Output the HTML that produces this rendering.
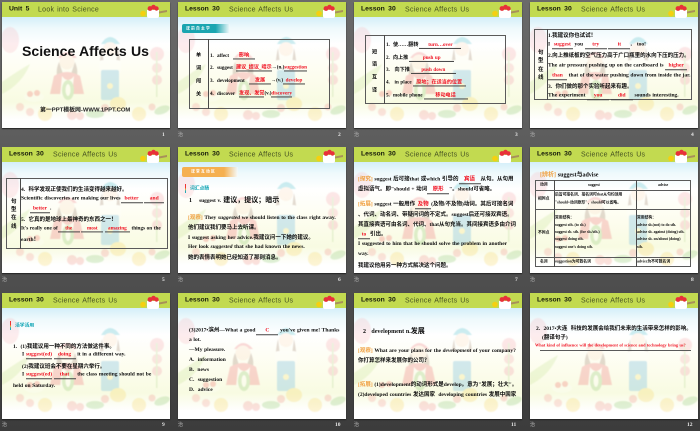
<!DOCTYPE html>
<html><head><meta charset="utf-8"><style>
html,body{margin:0;padding:0;width:700px;height:431px;overflow:hidden;background:linear-gradient(#6a6a6a,#565656 50%,#3c3c3c)}
.s{position:absolute;width:168px;height:126px;overflow:hidden;background:linear-gradient(#d4eef9 15px,#eef9fc 26px,#fff 42px,#fdfdee 75px,#f8fbe2 100px,#fff 118px);box-shadow:0 1px 1px #222}
.s>svg{position:absolute;left:0;top:0;width:168px;height:126px}
.s>svg:first-child{filter:blur(.5px)}
.h{position:absolute;left:0;top:0;width:168px;height:15px;background:#c2da50}
.l{position:absolute;left:7px;top:8px;transform:translateY(-50%);font:bold 6.8px "Liberation Sans",sans-serif;color:#14180a;line-height:1;word-spacing:1.5px;white-space:nowrap}
.a{position:absolute;left:51px;top:8px;transform:translateY(-50%);font:7px "Liberation Sans",sans-serif;color:#465222;line-height:1;letter-spacing:.27px;word-spacing:.6px;white-space:nowrap}
.t{position:absolute;white-space:nowrap;line-height:1;transform:translateY(-50%);font:bold 5.5px "Liberation Serif","Noto Sans CJK SC",serif;color:#0c0c0c;word-spacing:.3px}
.sm .t{font-size:5.1px}
.r{color:#f01020}
.o{color:#f0a040}
.u{display:inline-block;border-bottom:.5px solid #444;text-align:center;color:#f01020;line-height:1;vertical-align:baseline}
.n{position:absolute;font:bold 5.5px "Liberation Serif",serif;color:#e8e8e8;line-height:1;white-space:nowrap}
.i{position:absolute;font:5px "Liberation Sans","Noto Sans CJK SC",sans-serif;color:#bbb;line-height:1}
.b{position:absolute;box-sizing:border-box;border:.8px solid #5a5a5a}
.v{position:absolute;width:.8px;background:#4a4a4a}
.w{position:absolute;height:.7px;background:#5a5a5a}
.tg{position:absolute;height:9px;border-radius:2px 0 0 2px}
.tt{font:bold 3.8px "Liberation Sans","Noto Sans CJK SC",sans-serif;color:#fff;letter-spacing:1.2px}
.m{position:absolute;width:1px;height:9px;background:linear-gradient(#e33 45%,#f5c030 55%,#2ab 80%)}
.tl{color:#10a5b5;font-size:4.8px}
.x{font-size:3.8px;word-spacing:0}
</style></head><body>
<svg width="0" height="0" style="position:absolute"><defs>
<symbol id="bg" viewBox="0 0 168 126">
<g opacity=".24">
<ellipse cx="8" cy="38" rx="9" ry="13" fill="#f6b0b8"/><path d="M0 80Q14 70 28 62Q20 82 0 92Z" fill="#bfe08a"/>
<circle cx="155" cy="52" r="7" fill="#f39aa5"/><circle cx="155" cy="66" r="5" fill="#f39aa5"/><circle cx="155" cy="78" r="5" fill="#ee8a9a"/><rect x="154" y="50" width="1.5" height="45" fill="#a8d080"/>
<path d="M56 56Q65 44 75 56Z" fill="#e8626a"/><circle cx="65" cy="60" r="7.5" fill="#f8d8bc"/><path d="M57 60q-4 10 -1 16l5-4zM73 60q4 10 1 16l-5-4z" fill="#8a6a55"/>
<path d="M52 74Q65 66 78 74L82 92H48Z" fill="#e9585f"/><path d="M60 74Q66 82 72 74L70 94H58Z" fill="#fff"/>
<ellipse cx="66" cy="88" rx="6" ry="10" fill="#7fc060"/><ellipse cx="66" cy="88" rx="2.5" ry="6" fill="#fff"/>
<path d="M99 42Q108 28 118 42Z" fill="#35b4c0"/><circle cx="108" cy="47" r="7" fill="#f8d8bc"/><path d="M100 46q-3 14 -2 22l4-6zM116 46q3 14 2 22l-4-6z" fill="#8a6a55"/>
<rect x="97" y="58" width="22" height="14" rx="3" fill="#fff"/><rect x="99" y="68" width="18" height="30" rx="2" fill="#4aa8dc"/><circle cx="108" cy="84" r="3" fill="#f7e070"/>
<ellipse cx="32" cy="95" rx="10" ry="5" fill="#fff"/><circle cx="28" cy="92" r="3" fill="#e55"/><circle cx="35" cy="91" r="3" fill="#e55"/>
<circle cx="18" cy="105" r="4" fill="#f29088"/><circle cx="28" cy="110" r="4" fill="#f29088"/><ellipse cx="43" cy="112" rx="7" ry="7" fill="#f6d050"/>
<circle cx="70" cy="113" r="5" fill="#ee8078"/><circle cx="78" cy="114" r="4" fill="#ee8078"/><ellipse cx="93" cy="112" rx="9" ry="4" fill="#7cc060"/>
<ellipse cx="116" cy="102" rx="8" ry="7" fill="#f6d050"/><circle cx="103" cy="106" r="4" fill="#ee8078"/><ellipse cx="137" cy="112" rx="7" ry="7" fill="#f6d050"/><circle cx="150" cy="105" r="3.5" fill="#ee8078"/><ellipse cx="160" cy="108" rx="8" ry="4" fill="#7cc060" transform="rotate(-20 160 108)"/>
</g></symbol>
<symbol id="pot" viewBox="0 0 30 15">
<circle cx="4" cy="9.5" r="2.8" fill="#f5d010"/><path d="M8 6H20V12Q20 14 18 14H10Q8 14 8 12Z" fill="#fff"/><circle cx="11" cy="4.5" r="2.4" fill="#e8303a"/><circle cx="14.5" cy="3.2" r="2.4" fill="#e8303a"/><circle cx="17.5" cy="4.5" r="2.2" fill="#e8303a"/><path d="M20 7.5L28 6V8L20 9.5Z" fill="#a8905a"/>
</symbol></defs></svg>

<!-- 1 -->
<div class="s" style="left:2px;top:2px"><svg><use href="#bg"/></svg><div class="h"></div><svg style="left:137px;top:2px;width:30px;height:15px"><use href="#pot"/></svg>
<div class="l">Unit 5</div><div class="a" style="left:36px;font-size:7px">Look into Science</div>
<div class="t" style="left:20px;top:49px;font:bold 14.1px 'Liberation Sans',sans-serif;color:#111">Science Affects Us</div>
<div class="t" style="left:38px;top:107px;font:bold 5.9px 'Liberation Sans','Noto Sans CJK SC',sans-serif;color:#222">第一PPT模板网-WWW.1PPT.COM</div></div>
<div class="n" style="left:162px;top:133px">1</div>

<!-- 2 -->
<div class="s sm" style="left:178px;top:2px"><svg><use href="#bg"/></svg><div class="h"></div><svg style="left:137px;top:2px;width:30px;height:15px"><use href="#pot"/></svg>
<div class="l">Lesson 30</div><div class="a">Science Affects Us</div>
<div class="tg" style="left:4px;top:22px;width:48px;background:linear-gradient(90deg,#1aa5b0 70%,rgba(255,255,255,.5))"></div><div class="t tt" style="left:8px;top:26.5px;font-size:3.8px">课前自主学</div>
<div class="b" style="left:11px;top:37px;width:141px;height:70px"></div><div class="v" style="left:30px;top:37px;height:70px"></div>
<div class="t" style="left:18px;top:53px">单</div><div class="t" style="left:18px;top:66px">词</div><div class="t" style="left:18px;top:79px">闯</div><div class="t" style="left:18px;top:92px">关</div>
<div class="t" style="left:32px;top:54px">1.&nbsp; affect</div><div class="t" style="left:55px;top:54px"><span class="u" style="width:22px">影响</span></div>
<div class="t" style="left:32px;top:66px">2.&nbsp; suggest</div><div class="t" style="left:58px;top:66px"><span class="u">建议_提议_暗示</span>→(n.)<span class="u">suggestion</span></div>
<div class="t" style="left:32px;top:79px">3.&nbsp; development</div><div class="t" style="left:71px;top:79px"><span class="u" style="width:22px">发展</span>→(v.)<span class="u" style="width:22px">develop</span></div>
<div class="t" style="left:32px;top:92px">4.&nbsp; discover</div><div class="t" style="left:61px;top:92px"><span class="u">发现、发觉</span>(v.)<span class="u">discovery</span></div></div>
<div class="i" style="left:178px;top:133px">治</div><div class="n" style="left:338px;top:133px">2</div>

<!-- 3 -->
<div class="s sm" style="left:354px;top:2px"><svg><use href="#bg"/></svg><div class="h"></div><svg style="left:137px;top:2px;width:30px;height:15px"><use href="#pot"/></svg>
<div class="l">Lesson 30</div><div class="a">Science Affects Us</div>
<div class="b" style="left:11px;top:33px;width:141px;height:69px"></div><div class="v" style="left:30px;top:33px;height:69px"></div>
<div class="t" style="left:18px;top:50px">短</div><div class="t" style="left:18px;top:62px">语</div><div class="t" style="left:18px;top:75px">互</div><div class="t" style="left:18px;top:88px">译</div>
<div class="t" style="left:32px;top:43px">1. &nbsp;使……翻转<span class="u" style="width:42px;margin-left:1px">turn…over</span></div>
<div class="t" style="left:32px;top:56px">2. &nbsp;向上推<span class="u" style="width:45px;margin-left:1px">push up</span></div>
<div class="t" style="left:32px;top:68px">3. &nbsp; 向下推<span class="u" style="width:45px;margin-left:1px">push down</span></div>
<div class="t" style="left:32px;top:81px">4. &nbsp; in place<span class="u" style="width:53px;margin-left:1px">原地；在适当的位置</span></div>
<div class="t" style="left:32px;top:94px">5. &nbsp;mobile phone<span class="u" style="width:44px;margin-left:1px">移动电话</span></div></div>
<div class="i" style="left:354px;top:133px">治</div><div class="n" style="left:515px;top:133px">3</div>

<!-- 4 -->
<div class="s" style="left:530px;top:2px"><svg><use href="#bg"/></svg><div class="h"></div><svg style="left:137px;top:2px;width:30px;height:15px"><use href="#pot"/></svg>
<div class="l">Lesson 30</div><div class="a">Science Affects Us</div>
<div class="b" style="left:4px;top:27px;width:158px;height:71px"></div><div class="v" style="left:17px;top:27px;height:71px"></div>
<div class="t" style="left:8px;top:50px">句</div><div class="t" style="left:8px;top:58px">型</div><div class="t" style="left:8px;top:67px">在</div><div class="t" style="left:8px;top:75px">线</div>
<div class="t" style="left:18px;top:33px">1.我建议你也试试！</div>
<div class="t" style="left:18px;top:43px">I <span class="u" style="width:21px">suggest</span> you <span class="u" style="width:22px">try</span> <span class="u" style="width:22px">it</span>, &nbsp; too!</div>
<div class="t" style="left:18px;top:53px">2.向上推纸板的空气压力高于广口瓶里的水向下压的压力。</div>
<div class="t" style="left:18px;top:64px">The air pressure pushing up on the cardboard is <span class="u" style="width:22px">higher</span></div>
<div class="t" style="left:18px;top:74px"><span class="u" style="width:19px">than</span> that of the water pushing down from inside the jar.</div>
<div class="t" style="left:18px;top:84px">3.&nbsp; 你们做的那个实验听起来有趣。</div>
<div class="t" style="left:18px;top:94px">The experiment <span class="u" style="width:22px">you</span> <span class="u" style="width:22px">did</span> sounds interesting.</div></div>
<div class="i" style="left:530px;top:133px">治</div><div class="n" style="left:691px;top:133px">4</div>

<!-- 5 -->
<div class="s" style="left:2px;top:147px"><svg><use href="#bg"/></svg><div class="h"></div><svg style="left:137px;top:2px;width:30px;height:15px"><use href="#pot"/></svg>
<div class="l">Lesson 30</div><div class="a">Science Affects Us</div>
<div class="b" style="left:4px;top:31px;width:162px;height:71px"></div><div class="v" style="left:18px;top:31px;height:71px"></div>
<div class="t" style="left:9px;top:54px">句</div><div class="t" style="left:9px;top:62px">型</div><div class="t" style="left:9px;top:70px">在</div><div class="t" style="left:9px;top:79px">线</div>
<div class="t" style="left:19px;top:42px">4.&nbsp; 科学发现正使我们的生活变得越来越好。</div>
<div class="t" style="left:19px;top:52px">Scientific discoveries are making our lives<span class="u" style="width:22px">better</span> <span class="u" style="width:20px">and</span></div>
<div class="t" style="left:28px;top:62px"><span class="u" style="width:20px">better</span>.</div>
<div class="t" style="left:19px;top:72px">5.&nbsp; 它真的是地球上最神奇的东西之一！</div>
<div class="t" style="left:19px;top:82px;font-size:5.2px">It's really one of<span class="u" style="width:22px">the</span> <span class="u" style="width:22px">most</span> <span class="u" style="width:25px">amazing</span> things on the</div>
<div class="t" style="left:19px;top:92px">earth！</div></div>
<div class="i" style="left:2px;top:278px">治</div><div class="n" style="left:162px;top:278px">5</div>

<!-- 6 -->
<div class="s" style="left:178px;top:147px"><svg><use href="#bg"/></svg><div class="h"></div><svg style="left:137px;top:2px;width:30px;height:15px"><use href="#pot"/></svg>
<div class="l">Lesson 30</div><div class="a">Science Affects Us</div>
<div class="tg" style="left:4px;top:20px;width:56px;height:10px;background:linear-gradient(90deg,#f5b050 75%,rgba(255,255,255,.4))"></div><div class="t tt" style="left:13px;top:25px">课堂互动区</div>
<div class="m" style="left:7px;top:37px"></div><div class="t tl" style="left:12px;top:41px">词汇点睛</div>
<div class="t" style="left:11px;top:53px;font-size:7px"><span style="margin-right:5px;font-size:6px">1</span> <span style="font-size:5.4px">suggest v.</span> 建议，提议；暗示</div>
<div class="t" style="left:10px;top:70px"><span class="o">[观察]</span> They <i>suggested</i> we should listen to the class right away.</div>
<div class="t" style="left:10px;top:80px">他们建议我们要马上去听课。</div>
<div class="t" style="left:10px;top:90px">I suggest asking her advice.我建议问一下她的建议。</div>
<div class="t" style="left:10px;top:100px">Her look <i>suggested</i> that she had known the news.</div>
<div class="t" style="left:10px;top:110px">她的表情表明她已经知道了那则消息。</div></div>
<div class="i" style="left:178px;top:278px">治</div><div class="n" style="left:338px;top:278px">6</div>

<!-- 7 -->
<div class="s" style="left:354px;top:147px"><svg><use href="#bg"/></svg><div class="h"></div><svg style="left:137px;top:2px;width:30px;height:15px"><use href="#pot"/></svg>
<div class="l">Lesson 30</div><div class="a">Science Affects Us</div>
<div class="t" style="left:4px;top:32px"><span class="o">[探究]</span> suggest 后可接that 或which 引导的<span class="u" style="width:22px">宾语</span>从句。从句用</div>
<div class="t" style="left:4px;top:42px">虚拟语气。即"should + 动词<span class="u" style="width:22px">原形</span>"。should可省略。</div>
<div class="t" style="left:4px;top:57px"><span class="o">[拓展]</span> suggest 一般用作<span class="u" style="width:16px">及物</span>(及物/不及物)动词。其后可接名词</div>
<div class="t" style="left:4px;top:67px">、代词、动名词、带疑问词的不定式。suggest后还可接双宾语。</div>
<div class="t" style="left:4px;top:77px">其直接宾语可由名词、代词、that从句充当。其间接宾语多由介词</div>
<div class="t" style="left:4px;top:87px"><span class="u" style="width:12px">to</span>引出。</div>
<div class="t" style="left:4px;top:97px">I suggested to him that he should solve the problem in another</div>
<div class="t" style="left:4px;top:107px">way.</div>
<div class="t" style="left:4px;top:118px">我建议他用另一种方式解决这个问题。</div></div>
<div class="i" style="left:354px;top:278px">治</div><div class="n" style="left:515px;top:278px">7</div>

<!-- 8 -->
<div class="s" style="left:530px;top:147px"><svg><use href="#bg"/></svg><div class="h"></div><svg style="left:137px;top:2px;width:30px;height:15px"><use href="#pot"/></svg>
<div class="l">Lesson 30</div><div class="a">Science Affects Us</div>
<div class="t" style="left:10px;top:27px;font-size:6px"><span class="o">[辨析]</span> suggest与advise</div>
<div class="b" style="left:5px;top:33px;width:156px;height:87px"></div><div class="v" style="left:24px;top:33px;height:87px"></div><div class="v" style="left:106px;top:33px;height:87px"></div>
<div class="w" style="left:5px;top:43px;width:156px"></div><div class="w" style="left:5px;top:62px;width:156px"></div><div class="w" style="left:5px;top:110px;width:156px"></div>
<div class="t x" style="left:10px;top:38px">动词</div><div class="t x" style="left:58px;top:38px">suggest</div><div class="t x" style="left:128px;top:38px">advise</div>
<div class="t x" style="left:8px;top:52px">相同点</div><div class="t x" style="left:8px;top:86px">不同点</div><div class="t x" style="left:10px;top:115px">名词</div>
<div class="t x" style="left:25px;top:48px">后皆可接名词、接名词时that从句均须用</div>
<div class="t x" style="left:25px;top:56px">"should+动词原形"，should可以省略。</div>
<div class="t x" style="left:25px;top:71px">常用结构：</div>
<div class="t x" style="left:25px;top:78px">suggest sth. (to sb.)</div><div class="t x" style="left:25px;top:85px">suggest sb. sth. (for sb./sth.)</div><div class="t x" style="left:25px;top:92px">suggest doing sth.</div><div class="t x" style="left:25px;top:100px">suggest one's doing sth.</div>
<div class="t x" style="left:107px;top:71px">常用结构：</div>
<div class="t x" style="left:107px;top:78px">advise sb.(not) to do sth.</div><div class="t x" style="left:107px;top:85px">advise sb. against (doing) sth.</div><div class="t x" style="left:107px;top:92px">advise sb. on/about (doing)</div><div class="t x" style="left:107px;top:100px">sth.</div>
<div class="t x" style="left:25px;top:115px">suggestion为可数名词</div><div class="t x" style="left:107px;top:115px">advice为不可数名词</div></div>
<div class="i" style="left:530px;top:278px">治</div><div class="n" style="left:691px;top:278px">8</div>

<!-- 9 -->
<div class="s" style="left:2px;top:293px"><svg><use href="#bg"/></svg><div class="h"></div><svg style="left:137px;top:2px;width:30px;height:15px"><use href="#pot"/></svg>
<div class="l">Lesson 30</div><div class="a">Science Affects Us</div>
<div class="m" style="left:8px;top:28px"></div><div class="t tl" style="left:13px;top:32px">活学活用</div>
<div class="t" style="left:11px;top:53px">1.&nbsp; (1)我建议用一种不同的方法做这件事。</div>
<div class="t" style="left:20px;top:62px">I <span class="u" style="width:26px">suggest(ed)</span> <span class="u" style="width:22px">doing</span> it in a different way.</div>
<div class="t" style="left:20px;top:73px">(2)我建议班会不要在星期六举行。</div>
<div class="t" style="left:20px;top:82px">I <span class="u" style="width:26px">suggest(ed)</span> <span class="u" style="width:22px">that</span> the class meeting should not be</div>
<div class="t" style="left:11px;top:93px">held on Saturday.</div></div>
<div class="i" style="left:2px;top:423px">治</div><div class="n" style="left:162px;top:423px">9</div>

<!-- 10 -->
<div class="s" style="left:178px;top:293px"><svg><use href="#bg"/></svg><div class="h"></div><svg style="left:137px;top:2px;width:30px;height:15px"><use href="#pot"/></svg>
<div class="l">Lesson 30</div><div class="a">Science Affects Us</div>
<div class="t" style="left:11px;top:37px">(3)2017•滨州—What a good<span class="u" style="width:22px;margin-left:1px">C</span> you've given me! Thanks</div>
<div class="t" style="left:11px;top:47px">a lot.</div><div class="t" style="left:11px;top:57px">—My pleasure.</div>
<div class="t" style="left:11px;top:67px">A.&nbsp; information</div><div class="t" style="left:11px;top:77px">B.&nbsp; news</div><div class="t" style="left:11px;top:87px">C.&nbsp; suggestion</div><div class="t" style="left:11px;top:97px">D.&nbsp; advice</div></div>
<div class="i" style="left:178px;top:423px">治</div><div class="n" style="left:335px;top:423px">10</div>

<!-- 11 -->
<div class="s" style="left:354px;top:293px"><svg><use href="#bg"/></svg><div class="h"></div><svg style="left:137px;top:2px;width:30px;height:15px"><use href="#pot"/></svg>
<div class="l">Lesson 30</div><div class="a">Science Affects Us</div>
<div class="t" style="left:9px;top:38px;font-size:7px"><span style="font-size:6px">2 &nbsp; development n.</span>发展</div>
<div class="t" style="left:4px;top:57px"><span class="o">[观察]</span> What are your plans for the <i>development</i> of your company?</div>
<div class="t" style="left:4px;top:67px">你打算怎样来发展你的公司？</div>
<div class="t" style="left:4px;top:91px"><span class="o">[拓展]</span> (1)development的动词形式是develop。意为"发展；壮大"。</div>
<div class="t" style="left:4px;top:101px">(2)developed countries 发达国家 &nbsp;developing countries 发展中国家</div></div>
<div class="i" style="left:354px;top:423px">治</div><div class="n" style="left:511px;top:423px">11</div>

<!-- 12 -->
<div class="s" style="left:530px;top:293px"><svg><use href="#bg"/></svg><div class="h"></div><svg style="left:137px;top:2px;width:30px;height:15px"><use href="#pot"/></svg>
<div class="l">Lesson 30</div><div class="a">Science Affects Us</div>
<div class="t" style="left:6px;top:35px">2.&nbsp; 2017•大连 &nbsp;科技的发展会给我们未来的生活带来怎样的影响。</div>
<div class="t" style="left:12px;top:44px">(翻译句子)</div>
<div class="t r" style="left:5px;top:52px;font-size:4.3px">What kind of influence will the development of science and technology bring us?</div>
<div class="w" style="left:10px;top:57px;width:151px"></div></div>
<div class="i" style="left:530px;top:423px">治</div><div class="n" style="left:687px;top:423px">12</div>
</body></html>
